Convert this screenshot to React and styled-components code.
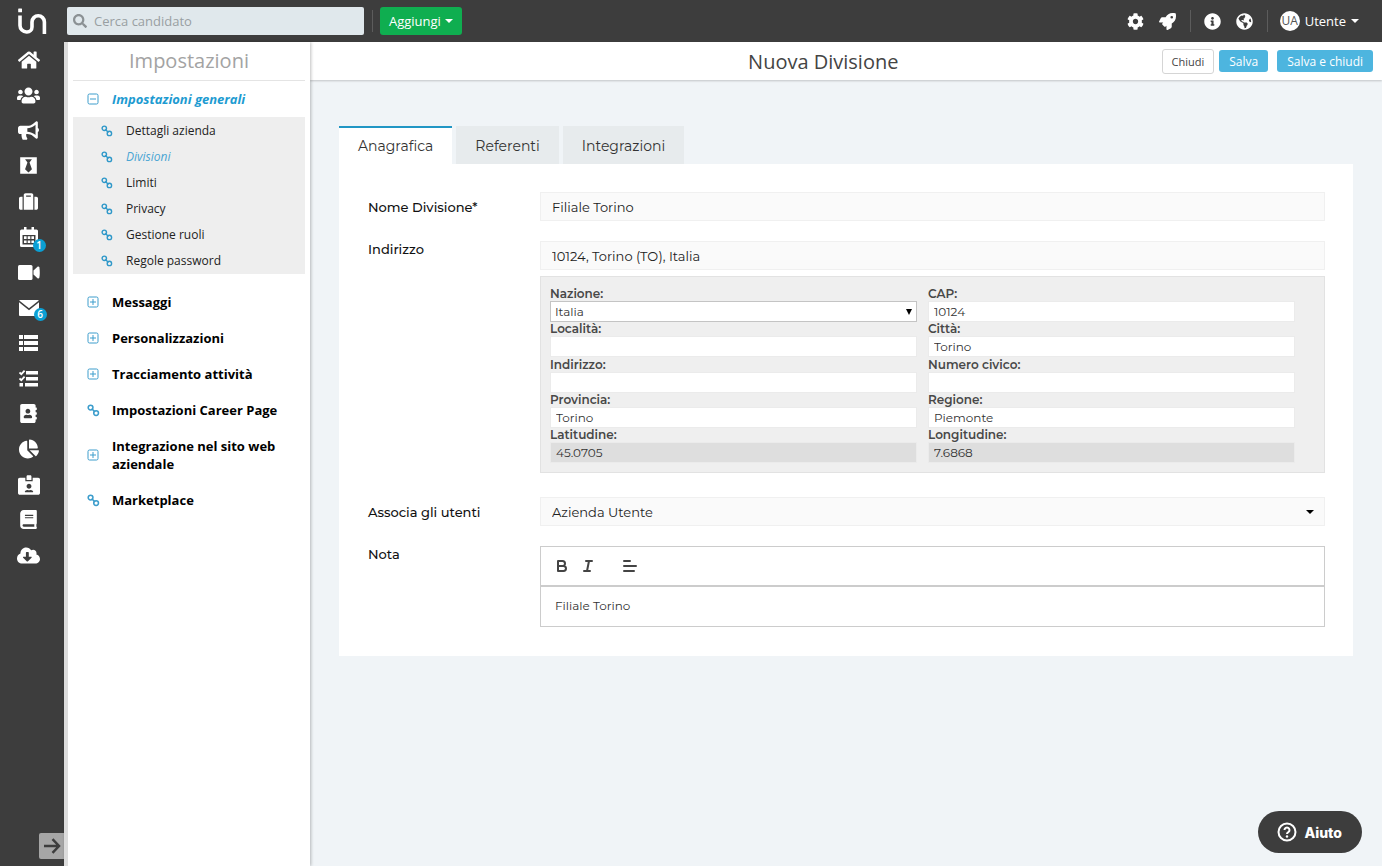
import React, { useState } from 'react'
import styled, { createGlobalStyle } from 'styled-components'
import {
  FaHome, FaUsers, FaBullhorn, FaBlackTie, FaSuitcase,
  FaAddressBook, FaChartPie, FaIdCardAlt, FaBook, FaCloudDownloadAlt,
  FaSearch, FaCog, FaRocket, FaInfoCircle, FaGlobeAmericas
} from 'react-icons/fa'

const GlobalStyle = createGlobalStyle`
  * {
    box-sizing: border-box;
  }

  body {
    margin: 0;
    background: #f0f4f7;
    font-family: 'Open Sans', sans-serif;
    font-size: 13px;
    color: #222;
  }

  button, input, select, textarea {
    margin: 0;
    font: inherit;
    color: inherit;
  }
`

const App = styled.div`
  min-height: 100vh;
  display: flex;
  flex-direction: column;
`

App.Body = styled.div`
  flex: 1;
  display: flex;
`

const TopBar = styled.header`
  height: 42px;
  padding-right: 23px;
  background: #3d3d3d;
  color: #fff;

  display: flex;
  align-items: center;
`

TopBar.Logo = styled.a`
  width: 67px;
  padding-left: 17px;
  color: #fff;

  svg {
    display: block;
  }
`

TopBar.Divider = styled.span`
  width: 1px;
  height: 22px;
  background: #5c5c5c;
`

TopBar.Tools = styled.div`
  margin-left: auto;

  display: flex;
  align-items: center;
  gap: 12px;
`

TopBar.Tool = styled.button`
  width: 20px;
  padding: 0;
  border: 0;
  background: none;
  font-size: 17px;
  cursor: pointer;

  display: flex;
  justify-content: center;
`

const Search = styled.label`
  width: 297px;
  height: 28px;
  margin-right: 8px;
  padding: 0 6px;
  border-radius: 2px;
  background: #e0e8ec;
  color: #8b9194;

  display: flex;
  align-items: center;
  gap: 7px;

  svg {
    flex-shrink: 0;
    font-size: 14px;
  }
`

Search.Input = styled.input`
  width: 100%;
  padding: 0;
  border: 0;
  outline: none;
  background: none;
  color: #222;

  &::placeholder {
    color: #999fa2;
    opacity: 1;
  }
`

const AddButton = styled.button`
  height: 28px;
  margin-left: 7px;
  padding: 0 9px;
  border: 0;
  border-radius: 3px;
  background: #0fae50;
  color: #fff;
  font-weight: 500;
  cursor: pointer;

  display: flex;
  align-items: center;
  gap: 4px;
`

const User = styled.button`
  padding: 0;
  border: 0;
  background: none;
  cursor: pointer;

  display: flex;
  align-items: center;
  gap: 5px;
`

User.Avatar = styled.span`
  width: 20px;
  height: 20px;
  border-radius: 50%;
  background: #fff;
  color: #555;
  font-size: 12px;
  line-height: 20px;
  text-align: center;
`

const Rail = styled.nav`
  width: 64px;
  flex-shrink: 0;
  background: #3d3d3d;

  display: flex;
  flex-direction: column;
  justify-content: space-between;
`

Rail.List = styled.div`
  height: 531px;
  padding-right: 7px;

  display: flex;
  flex-direction: column;
`

Rail.Link = styled.a`
  flex: 1;
  color: #fff;
  font-size: ${props => props.$size || 20}px;

  display: flex;
  align-items: center;
  justify-content: center;
`

Rail.Icon = styled.span`
  position: relative;
  display: flex;
`

Rail.Badge = styled.span`
  position: absolute;
  right: -8px;
  bottom: -5px;
  width: 13px;
  height: 13px;
  border-radius: 50%;
  background: #0b9fd4;
  font-size: 10px;
  font-weight: 600;
  line-height: 13px;
  text-align: center;
`

Rail.Expand = styled.button`
  align-self: flex-end;
  width: 25px;
  height: 26px;
  margin-bottom: 7px;
  padding: 0;
  border: 0;
  border-radius: 2px 0 0 2px;
  background: #a6a6a6;
  color: #3d3d3d;
  cursor: pointer;

  display: flex;
  align-items: center;
  justify-content: center;
`

const Settings = styled.aside`
  width: 246px;
  flex-shrink: 0;
  padding: 0 5px;
  border-left: 4px solid #dcdcdc;
  background: #fff;
  box-shadow: 1px 0 3px rgba(0, 0, 0, 0.25);
  position: relative;
  z-index: 2;
`

Settings.Title = styled.h2`
  margin: 0;
  border-bottom: 1px solid #e4e4e4;
  color: #a3a3a3;
  font-size: 20px;
  font-weight: 400;
  line-height: 38px;
  text-align: center;
`

Settings.Item = styled.a`
  padding: 9px 16px 9px 13px;
  color: ${props => props.$active ? '#1d9bd1' : '#000'};
  font-weight: 700;
  font-style: ${props => props.$active ? 'italic' : 'normal'};
  line-height: 18px;
  text-decoration: none;

  display: grid;
  grid-template-columns: 14px 1fr;
  align-items: center;
  column-gap: 12px;

  svg {
    color: #3c9dcc;
    justify-self: center;
  }
`

Settings.Sub = styled.div`
  margin-bottom: 10px;
  padding-top: 1px;
  background: #eee;
`

Settings.SubItem = styled.a`
  padding: 4px 16px 4px 28px;
  color: ${props => props.$active ? '#4aa5d3' : '#222'};
  font-size: 12px;
  font-style: ${props => props.$active ? 'italic' : 'normal'};
  line-height: 18px;
  text-decoration: none;

  display: flex;
  align-items: center;
  gap: 13px;

  svg {
    color: #2f98c9;
  }
`

const Page = styled.main`
  flex: 1;
  min-width: 0;
`

Page.Header = styled.div`
  height: 38px;
  padding: 0 9px 0 184px;
  background: #fff;
  box-shadow: 0 1px 2px rgba(0, 0, 0, 0.2);

  display: flex;
  align-items: center;
`

Page.Title = styled.h1`
  flex: 1;
  margin: 0;
  color: #444;
  font-size: 20px;
  font-weight: 400;
  text-align: center;
`

Page.Actions = styled.div`
  display: flex;
  align-items: center;
`

Page.Content = styled.div`
  padding: 46px 29px 48px;
  font-family: Montserrat, Inter, sans-serif;
`

const Button = styled.button`
  height: 22px;
  margin-left: 9px;
  padding: 0 10px;
  border: 0;
  border-radius: 3px;
  background: #4db5df;
  color: #fff;
  font-size: 12px;
  cursor: pointer;

  ${props => props.$plain && `
    height: 25px;
    margin-right: -4px;
    padding: 0 9px;
    border: 1px solid #d5d5d5;
    background: #fff;
    color: #444;
    font-size: 11px;
  `}
`

const Tabs = styled.div`
  display: flex;
  gap: 4px;
`

Tabs.Tab = styled.button`
  height: 38px;
  padding: 0 19px;
  border: 0;
  border-top: 2px solid ${props => props.$active ? '#2196c4' : '#e7ebed'};
  background: ${props => props.$active ? '#fff' : '#e7ebed'};
  color: #333;
  font-size: 14px;
  cursor: pointer;
`

const Card = styled.form`
  padding: 28px 28px 29px 29px;
  background: #fff;

  display: flex;
  flex-direction: column;
`

const Row = styled.div`
  margin-bottom: ${props => props.$gap || 20}px;

  display: grid;
  grid-template-columns: 172px 1fr;
  align-items: ${props => props.$top ? 'start' : 'center'};

  &:last-child {
    margin-bottom: 0;
  }
`

Row.Label = styled.label`
  color: #111;
  font-weight: 500;
  line-height: 16px;
`

const TextField = styled.input`
  width: 100%;
  height: 29px;
  padding: 0 11px;
  border: 1px solid #f0f0f0;
  outline: none;
  background: #fafafa;
  color: #222;
`

const SelectBox = styled.div`
  position: relative;

  svg {
    position: absolute;
    top: 50%;
    right: ${props => props.$small ? 5 : 11}px;
    transform: translateY(-50%);
    pointer-events: none;
    color: #000;
  }
`

SelectBox.Field = styled(TextField)`
  appearance: none;
`

const Address = styled.div`
  height: 197px;
  margin-top: 6px;
  padding: 10px 29px 9px 9px;
  border: 1px solid #e2e2e2;
  background: #efefef;

  display: grid;
  grid-template-columns: 1fr 1fr;
  align-content: space-between;
  column-gap: 11px;
`

Address.Label = styled.label`
  display: block;
  color: #484848;
  font-size: 12px;
  font-weight: 600;
  line-height: 14px;
`

Address.Input = styled.input`
  display: block;
  width: 100%;
  height: 21px;
  padding: 0 5px;
  border: 1px solid ${props => props.as === 'select' ? '#c4c4c4' : '#ebebeb'};
  border-radius: 0;
  outline: none;
  appearance: none;
  background: ${props => props.readOnly ? '#dedede' : '#fff'};
  color: #333;
  font-size: 12px;

  ${props => props.as === 'select' && `
    padding: 0 4px;
  `}
`

const Editor = styled.div`
  border: 1px solid #ccc;
`

Editor.Toolbar = styled.div`
  height: 40px;
  padding: 0 12px;
  border-bottom: 2px solid #ccc;

  display: flex;
  align-items: center;
  gap: 8px;
`

Editor.Tool = styled.button`
  padding: 0;
  border: 0;
  background: none;
  color: #444;
  cursor: pointer;

  display: flex;

  &:last-child {
    margin-left: 16px;
  }
`

Editor.Area = styled.textarea`
  display: block;
  width: 100%;
  height: 39px;
  padding: 10px 14px;
  border: 0;
  outline: none;
  resize: none;
  background: #fff;
  color: #333;
  font-size: 12px;
  line-height: 18px;
`

const Help = styled.button`
  position: fixed;
  right: 20px;
  bottom: 13px;
  height: 42px;
  padding: 0 20px 0 19px;
  border: 0;
  border-radius: 21px;
  background: #3d3d3d;
  color: #fff;
  font-family: Inter, sans-serif;
  font-size: 14px;
  font-weight: 800;
  cursor: pointer;

  display: flex;
  align-items: center;
  gap: 7px;
`

const LogoMark = () => (
  <svg width='30' height='28' viewBox='0 0 30 28' fill='none' stroke='currentColor' strokeWidth='3.6'>
    <path d='M3 8.500V18.500a6.500 6.500 0 0 0 6.500 6.500h.5a5 5 0 0 0 5-5V15a6 6 0 0 1 12.400 0V27' />
    <rect x='1.200' y='1.500' width='3.800' height='3.800' rx='.4' fill='currentColor' stroke='none' />
  </svg>
)

const CaretIcon = () => (
  <svg width='8' height='4' viewBox='0 0 8 4' fill='currentColor'>
    <path d='M0 0h8L4 4z' />
  </svg>
)

const CalendarIcon = () => (
  <svg width='18' height='20' viewBox='0 0 18 20' fill='currentColor'>
    <path fillRule='evenodd' d='M4 0h2.500v2.500h5V0H14v2.500h2.500A1.500 1.500 0 0 1 18 4v14.500a1.500 1.500 0 0 1-1.500 1.500h-15A1.500 1.500 0 0 1 0 18.500V4a1.500 1.500 0 0 1 1.500-1.500H4zM2.500 8v9.500h13V8z' />
    <path d='M4 9.300h2.600v2.600H4zM7.700 9.300h2.600v2.600H7.700zM11.400 9.300H14v2.600h-2.600zM4 13.400h2.600V16H4zM7.700 13.400h2.600V16H7.700zM11.400 13.400H14V16h-2.600z' />
  </svg>
)

const VideoIcon = () => (
  <svg width='22' height='15' viewBox='0 0 22 15' fill='currentColor'>
    <rect width='14.500' height='15' rx='1.500' />
    <path d='M15.500 5.500 19.500 1.700c.7-.6 1.700-.2 1.900.7.500 3.300.5 6.900 0 10.200-.2.900-1.200 1.300-1.900.7l-4-3.800z' />
  </svg>
)

const MailIcon = () => (
  <svg width='20' height='16' viewBox='0 0 20 16' fill='currentColor'>
    <path d='M1 0h18a1 1 0 0 1 .8.500L10 8.300.200.500A1 1 0 0 1 1 0z' />
    <path d='M0 2.300 10 10.300l10-8V15a1 1 0 0 1-1 1H1a1 1 0 0 1-1-1z' />
  </svg>
)

const ListIcon = () => (
  <svg width='19' height='16' viewBox='0 0 19 16' fill='currentColor'>
    <path d='M0 0h4v4H0zM5 0h14v4H5zM0 6h4v4H0zM5 6h14v4H5zM0 12h4v4H0zM5 12h14v4H5z' />
  </svg>
)

const ChecklistIcon = () => (
  <svg width='19' height='17' viewBox='0 0 19 17' fill='currentColor'>
    <path d='M7 1h12v3.500H7zM7 7h12v3.500H7zM6 13h13v3.500H6zM.5 13H4v3.500H.5z' />
    <path d='M.5 2.500 2.300 4.200 5.600.7M.5 8.500l1.800 1.700L5.600 6.700' fill='none' stroke='currentColor' strokeWidth='1.800' />
  </svg>
)

const LinkIcon = ({ size = 13 }) => (
  <svg width={size} height={size} viewBox='0 0 12 12' fill='none' stroke='currentColor' strokeWidth='1.400'>
    <circle cx='3.300' cy='3.300' r='2.200' />
    <circle cx='8.400' cy='8.400' r='2.200' />
    <path d='M4.300 4.300l3.100 3.100' />
  </svg>
)

const ToggleIcon = ({ open }) => (
  <svg width='12' height='12' viewBox='0 0 12 12' fill='none' stroke='currentColor'>
    <rect x='1' y='1' width='10' height='10' rx='1.500' />
    <path d={open ? 'M3 6h6' : 'M3 6h6M6 3v6'} />
  </svg>
)

const ToolIcon = ({ d }) => (
  <svg width='18' height='18' viewBox='0 0 18 18' fill='none' stroke='currentColor' strokeWidth='2' strokeLinecap='round' strokeLinejoin='round'>
    <path d={d} />
  </svg>
)

const ArrowIcon = () => (
  <svg width='18' height='16' viewBox='0 0 18 16' fill='none' stroke='currentColor' strokeWidth='2.500'>
    <path d='M1 8h15M9.500 1.200 16 8l-6.500 6.800' />
  </svg>
)

const HelpIcon = () => (
  <svg width='20' height='20' viewBox='0 0 20 20' fill='none' stroke='currentColor' strokeWidth='2'>
    <circle cx='10' cy='10' r='8.500' />
    <path d='M7.500 8a2.500 2.500 0 1 1 3.800 2.100c-.9.500-1.300.9-1.300 1.900' />
    <circle cx='10' cy='14.500' r='1.200' fill='currentColor' stroke='none' />
  </svg>
)

const railItems = [
  { label: 'Home', icon: FaHome, size: 22 },
  { label: 'Candidati', icon: FaUsers, size: 23 },
  { label: 'Annunci', icon: FaBullhorn, size: 21 },
  { label: 'Posizioni', icon: FaBlackTie, size: 19 },
  { label: 'Aziende', icon: FaSuitcase, size: 19 },
  { label: 'Calendario', icon: CalendarIcon, badge: 1 },
  { label: 'Video', icon: VideoIcon },
  { label: 'Posta', icon: MailIcon, badge: 6 },
  { label: 'Liste', icon: ListIcon },
  { label: 'Compiti', icon: ChecklistIcon },
  { label: 'Contatti', icon: FaAddressBook, size: 19 },
  { label: 'Statistiche', icon: FaChartPie, size: 20 },
  { label: 'Tessere', icon: FaIdCardAlt, size: 22 },
  { label: 'Manuale', icon: FaBook, size: 19 },
  { label: 'Scarica', icon: FaCloudDownloadAlt, size: 23 }
]

const generalItems = ['Dettagli azienda', 'Divisioni', 'Limiti', 'Privacy', 'Gestione ruoli', 'Regole password']

const settingsItems = [
  { label: 'Messaggi' },
  { label: 'Personalizzazioni' },
  { label: 'Tracciamento attività' },
  { label: 'Impostazioni Career Page', link: true },
  { label: 'Integrazione nel sito web aziendale' },
  { label: 'Marketplace', link: true }
]

const addressFields = [
  { id: 'nazione', label: 'Nazione:', value: 'Italia', select: true },
  { id: 'cap', label: 'CAP:', value: '10124' },
  { id: 'localita', label: 'Località:', value: '' },
  { id: 'citta', label: 'Città:', value: 'Torino' },
  { id: 'via', label: 'Indirizzo:', value: '' },
  { id: 'civico', label: 'Numero civico:', value: '' },
  { id: 'provincia', label: 'Provincia:', value: 'Torino' },
  { id: 'regione', label: 'Regione:', value: 'Piemonte' },
  { id: 'latitudine', label: 'Latitudine:', value: '45.0705', readOnly: true },
  { id: 'longitudine', label: 'Longitudine:', value: '7.6868', readOnly: true }
]

const editorTools = [
  { label: 'Grassetto', d: 'M5 4h4.500a2.500 2.500 0 0 1 0 5H5zM5 9h5.500a2.500 2.500 0 0 1 0 5H5z' },
  { label: 'Corsivo', d: 'M7 4h6M5 14h6M8 14l2-10' },
  { label: 'Allineamento', d: 'M3 4h6M3 9h12M3 14h10' }
]

const tabs = ['Anagrafica', 'Referenti', 'Integrazioni']

const AddressField = ({ id, label, value, select, readOnly }) => (
  <div>
    <Address.Label htmlFor={id}>{label}</Address.Label>
    {select
      ? <SelectBox $small>
        <Address.Input as='select' id={id}>
          <option>{value}</option>
        </Address.Input>
        <svg width='6' height='6' viewBox='0 0 6 6' fill='currentColor'><path d='M0 0h6L3 6z' /></svg>
      </SelectBox>
      : <Address.Input id={id} defaultValue={value} readOnly={readOnly} />
    }
  </div>
)

export default function Main () {
  const [tab, setTab] = useState('Anagrafica')

  return (
    <App>
      <GlobalStyle />
      <TopBar>
        <TopBar.Logo href='#' aria-label='Home'><LogoMark /></TopBar.Logo>
        <Search>
          <FaSearch />
          <Search.Input placeholder='Cerca candidato' aria-label='Cerca candidato' />
        </Search>
        <TopBar.Divider />
        <AddButton>Aggiungi <CaretIcon /></AddButton>
        <TopBar.Tools>
          <TopBar.Tool aria-label='Impostazioni'><FaCog /></TopBar.Tool>
          <TopBar.Tool aria-label='Novità'><FaRocket /></TopBar.Tool>
          <TopBar.Divider />
          <TopBar.Tool aria-label='Informazioni'><FaInfoCircle /></TopBar.Tool>
          <TopBar.Tool aria-label='Lingua'><FaGlobeAmericas /></TopBar.Tool>
          <TopBar.Divider />
          <User>
            <User.Avatar>UA</User.Avatar>
            Utente
            <CaretIcon />
          </User>
        </TopBar.Tools>
      </TopBar>

      <App.Body>
        <Rail>
          <Rail.List>
            {railItems.map(({ label, icon: Icon, size, badge }) =>
              <Rail.Link key={label} href='#' aria-label={label} $size={size}>
                <Rail.Icon>
                  <Icon />
                  {badge && <Rail.Badge>{badge}</Rail.Badge>}
                </Rail.Icon>
              </Rail.Link>)
            }
          </Rail.List>
          <Rail.Expand aria-label='Espandi menu'><ArrowIcon /></Rail.Expand>
        </Rail>

        <Settings>
          <Settings.Title>Impostazioni</Settings.Title>
          <Settings.Item href='#' $active><ToggleIcon open />Impostazioni generali</Settings.Item>
          <Settings.Sub>
            {generalItems.map(item =>
              <Settings.SubItem key={item} href='#' $active={item === 'Divisioni'}>
                <LinkIcon size={12} />{item}
              </Settings.SubItem>)
            }
          </Settings.Sub>
          {settingsItems.map(({ label, link }) =>
            <Settings.Item key={label} href='#'>
              {link ? <LinkIcon /> : <ToggleIcon />}
              {label}
            </Settings.Item>)
          }
        </Settings>

        <Page>
          <Page.Header>
            <Page.Title>Nuova Divisione</Page.Title>
            <Page.Actions>
              <Button $plain>Chiudi</Button>
              <Button>Salva</Button>
              <Button>Salva e chiudi</Button>
            </Page.Actions>
          </Page.Header>

          <Page.Content>
            <Tabs role='tablist'>
              {tabs.map(name =>
                <Tabs.Tab key={name} role='tab' aria-selected={tab === name} $active={tab === name} onClick={() => setTab(name)}>
                  {name}
                </Tabs.Tab>)
              }
            </Tabs>
            <Card>
              <Row>
                <Row.Label htmlFor='nome'>Nome Divisione*</Row.Label>
                <TextField id='nome' defaultValue='Filiale Torino' />
              </Row>
              <Row $top $gap={24}>
                <Row.Label htmlFor='indirizzo'>Indirizzo</Row.Label>
                <div>
                  <TextField id='indirizzo' defaultValue='10124, Torino (TO), Italia' />
                  <Address>
                    {addressFields.map(field => <AddressField key={field.id} {...field} />)}
                  </Address>
                </div>
              </Row>
              <Row>
                <Row.Label htmlFor='utenti'>Associa gli utenti</Row.Label>
                <SelectBox>
                  <SelectBox.Field as='select' id='utenti'>
                    <option>Azienda Utente</option>
                  </SelectBox.Field>
                  <CaretIcon />
                </SelectBox>
              </Row>
              <Row $top>
                <Row.Label htmlFor='nota'>Nota</Row.Label>
                <Editor>
                  <Editor.Toolbar>
                    {editorTools.map(({ label, d }) =>
                      <Editor.Tool key={label} type='button' aria-label={label}><ToolIcon d={d} /></Editor.Tool>)
                    }
                  </Editor.Toolbar>
                  <Editor.Area id='nota' defaultValue='Filiale Torino' />
                </Editor>
              </Row>
            </Card>
          </Page.Content>
        </Page>
      </App.Body>

      <Help><HelpIcon />Aiuto</Help>
    </App>
  )
}
